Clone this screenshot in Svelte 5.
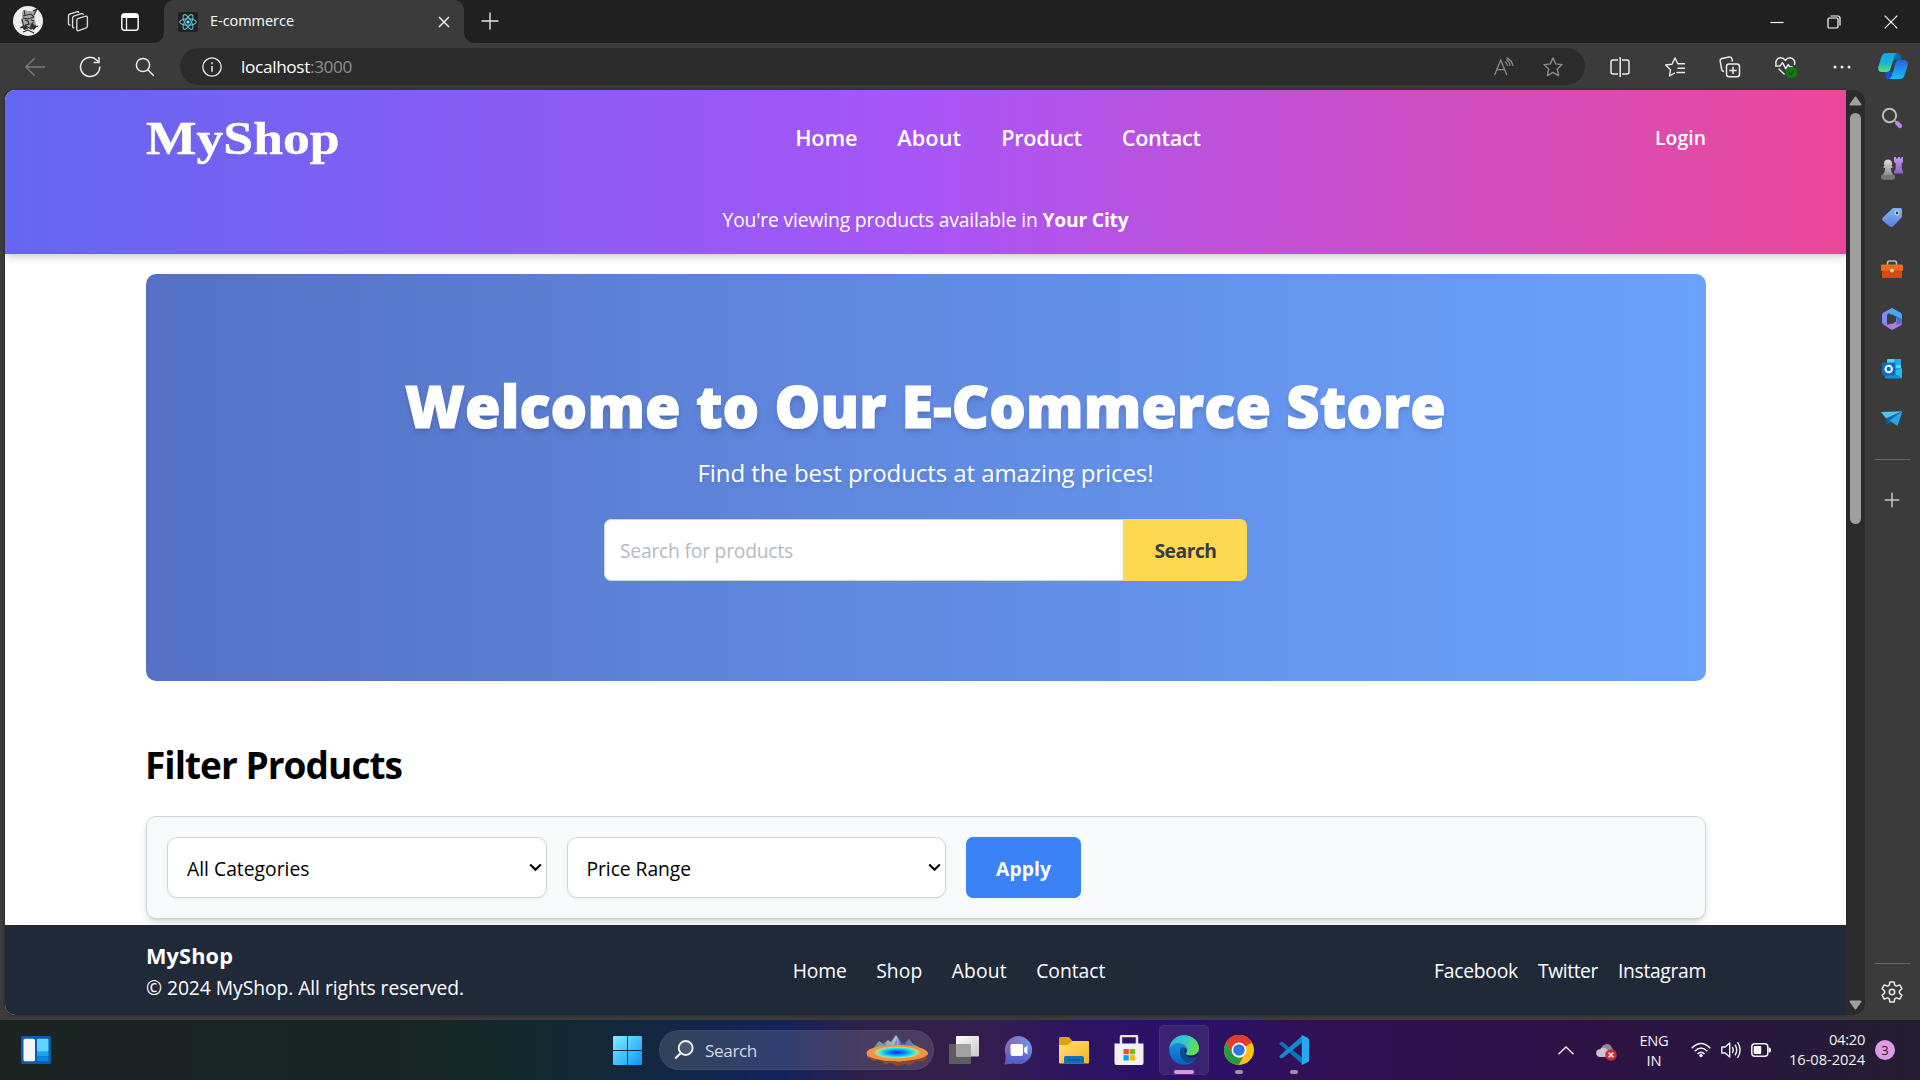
<script>
  // Spreads letter-spacing so that a label fills the given advance width.
  function fit(node, width) {
    const range = document.createRange();
    range.selectNodeContents(node);
    const natural = range.getBoundingClientRect().width;
    const count = node.textContent.length;
    node.style.letterSpacing = `${(width - natural) / count}px`;
  }

  const nav = [['Home', 62], ['About', 64], ['Product', 80.5], ['Contact', 79]];
  const footNav = [['Home', 54], ['Shop', 46], ['About', 55], ['Contact', 69]];
  const social = [['Facebook', 84], ['Twitter', 60], ['Instagram', 88]];
  const filters = [['All Categories', 122.5], ['Price Range', 104.5]];
</script>

<div class="screen">
  <div class="tabbar">
    <svg class="avatar" width="30" height="30" viewBox="0 0 30 30">
      <circle cx="15" cy="15" r="15" fill="#eee" />
      <path d="M9 6l3-2 3 1 5 0 3-2-2 8 2 7-4 6-6-2-5-6 1-5z" fill="#a5a5a5" />
      <path d="M11 4l1 5M20 5l4-2-3 6M10 10l8-2 3 3-6 2-5-1M12 14l3 1 1 3-4 1M18 14l3 1M7 22l6-2 5 3 7-3M10 26l5-2 6 3M20 16l-1 6M9 13l2 9" stroke="#2b2b2b" stroke-width="1.100" fill="none" />
      <path d="M18 17l6 3-3 4-4-2zM8 20l5-1 2 4-4 1z" fill="#333" />
    </svg>
    <svg class="spaces" width="22" height="22" viewBox="0 0 22 22" fill="none" stroke="#d6d6d6" stroke-width="1.4" stroke-linejoin="round" stroke-linecap="round">
      <path d="M10.8 7.600l7.800-2.400q1.800-.4 1.800 1.300v8.600q0 1.300-1.200 1.700l-7.500 2.800q-1.900.5-1.900-1.400V9.200q0-1.200 1-1.600z" />
      <path d="M6.800 16.700q-1.200.2-1.200-1.300V7q0-1.400 1.200-1.800l7.600-2.500q1.500-.4 1.800.6" />
      <path d="M3 14q-1.500.2-1.500-1.300V5q0-1.500 1.300-2l7-2.200q1.500-.4 1.900.6" />
    </svg>
    <svg class="vtabs" width="18" height="18" viewBox="0 0 18 18">
      <rect x=".8" y=".8" width="16.400" height="16.400" rx="2.800" fill="none" stroke="#f2f2f2" stroke-width="1.500" />
      <path d="M1 5V3q0-2 2-2h12q2 0 2 2v2z" fill="#fff" /><path d="M5.500 5v12" stroke="#f2f2f2" stroke-width="1.300" />
    </svg>
    <div class="tab">
      <svg width="20" height="20" viewBox="0 0 20 20" fill="none" stroke="#58c4dc" stroke-width="1.050">
        <rect width="20" height="20" rx="1.500" fill="#222" stroke="none" />
        <ellipse cx="10" cy="10" rx="8.300" ry="3.200" />
        <ellipse cx="10" cy="10" rx="8.300" ry="3.200" transform="rotate(60 10 10)" />
        <ellipse cx="10" cy="10" rx="8.300" ry="3.200" transform="rotate(120 10 10)" />
        <circle cx="10" cy="10" r="1.600" fill="#7fe7ff" stroke="none" />
      </svg>
      <span class="tabtitle" use:fit={84}>E-commerce</span>
      <svg class="tabclose" width="12" height="12" viewBox="0 0 12 12" stroke="#eee" stroke-width="1.500"><path d="M1 1l10 10M11 1L1 11" /></svg>
    </div>
    <svg class="newtab" width="18" height="18" viewBox="0 0 18 18" stroke="#e6e6e6" stroke-width="1.400"><path d="M9 .5v17M.5 9h17" /></svg>
    <div class="wincontrols">
      <svg width="14" height="14" viewBox="0 0 14 14" stroke="#fff" stroke-width="1.200"><path d="M.5 7.500h13" /></svg>
      <svg width="14" height="14" viewBox="0 0 14 14" stroke="#fff" stroke-width="1.200" fill="none"><rect x="1" y="3" width="10" height="10" rx="1.200" /><path d="M3.500 1H11q2 0 2 2v7.500" /></svg>
      <svg width="14" height="14" viewBox="0 0 14 14" stroke="#fff" stroke-width="1.200"><path d="M.7.700l12.600 12.600M13.300.700L.7 13.300" /></svg>
    </div>
  </div>

  <div class="toolbar">
    <svg class="back" width="20" height="18" viewBox="0 0 20 18" fill="none" stroke="#7c7c7c" stroke-width="1.300"><path d="M9.500.5L.8 9l8.700 8.500M.8 9H20" /></svg>
    <svg class="reload" width="22" height="22" viewBox="0 0 22 22" fill="none" stroke="#ececec" stroke-width="1.500"><path d="M20.700 10.500a9.600 9.600 0 1 1-2.800-6.300L20 6.300" /><path d="M20 1v5.400h-5.400" /></svg>
    <svg class="find" width="20" height="20" viewBox="0 0 20 20" fill="none" stroke="#ececec" stroke-width="1.500"><circle cx="8" cy="8" r="6.600" /><path d="M12.800 12.800l6 6" /></svg>
    <div class="urlbar">
      <svg width="20" height="20" viewBox="0 0 20 20" fill="none" stroke="#ececec" stroke-width="1.300"><circle cx="10" cy="10" r="9.200" /><path d="M10 9v5.800M10 5.300v1.900" stroke-width="1.500" /></svg>
      <span class="url"><span use:fit={69}>localhost</span><span class="port" use:fit={42}>:3000</span></span>
      <svg class="aloud" width="20" height="20" viewBox="0 0 20 20" fill="none" stroke="#8b8b8b" stroke-width="1.300"><path d="M.6 18L6.800 3l6 15M2.600 12.700h8.200" /><path d="M11 4.700q2.200 1.400 2.500 4.300M12.500 2.500q3.200 2.300 3.600 6.500M12.500.6q5.500 2.800 6.500 8.400" /></svg>
      <svg width="20" height="20" viewBox="0 0 20 20" fill="none" stroke="#8b8b8b" stroke-width="1.400" stroke-linejoin="round"><path d="M10 1l2.700 5.900 6.300.7-4.700 4.400 1.300 6.600L10 15.400l-5.600 3.200 1.300-6.600L1 7.600l6.300-.7z" /></svg>
    </div>
    <div class="tools">
      <svg width="22" height="22" viewBox="0 0 22 22" fill="none" stroke="#ececec" stroke-width="1.500"><path d="M9 4H4Q2 4 2 6v10q0 2 2 2h5M13 4h5q2 0 2 2v10q0 2-2 2h-5M11.200 1v20" /></svg>
      <svg width="22" height="22" viewBox="0 0 22 22" fill="none" stroke="#ececec" stroke-width="1.400" stroke-linejoin="round" stroke-linecap="round"><path d="M10.600 17L5.500 20l1-6.300L1.600 9l6.400-.8L11 2l2.800 5.700h6.700M14 12.300h6.500M13 16.500h7.500" /></svg>
      <svg width="22" height="22" viewBox="0 0 22 22" fill="none" stroke="#ececec" stroke-width="1.500" stroke-linejoin="round"><rect x="7.500" y="8" width="13" height="12.800" rx="2.500" /><path d="M14 10.700v7.400M10.300 14.400h7.400M5 15.500q-1.800 0-2.300-2L1.200 5.200Q.9 3 3 2.500L10 1q2.200-.4 2.900 1.700l.6 2.800" /></svg>
      <svg width="24" height="24" viewBox="0 0 24 24" fill="none" stroke="#ececec" stroke-width="1.500" stroke-linejoin="round"><path d="M2.200 10C1 6.500 3 2.700 6.600 2.700c2.600 0 4 1.700 4.700 2.600.7-.9 2.100-2.600 4.700-2.600 3.600 0 5.600 3.800 4.400 7.300M4.600 13.800l6 5.700M1 11h5l2.500-3.300 3.200 6 2.500-4 1.300 2h3" /><circle cx="17.500" cy="17.500" r="5.800" fill="#107c10" stroke="none" /><path d="M14.800 17.500l1.900 2 3.500-4" stroke="#164d16" stroke-width="1.400" /></svg>
      <svg width="22" height="22" viewBox="0 0 22 22" fill="#ececec"><circle cx="4" cy="11" r="1.500" /><circle cx="11" cy="11" r="1.500" /><circle cx="18" cy="11" r="1.500" /></svg>
    </div>
    <svg class="copilot" width="30" height="28" viewBox="0 0 30 28">
      <defs>
        <linearGradient id="cpa" x1="0" y1="0" x2="0" y2="1"><stop offset="0" stop-color="#14a5f0" /><stop offset=".5" stop-color="#12b5cf" /><stop offset="1" stop-color="#5be079" /></linearGradient>
        <linearGradient id="cpb" x1="0" y1="0" x2="0" y2="1"><stop offset="0" stop-color="#2165d8" /><stop offset="1" stop-color="#14c0fa" /></linearGradient>
      </defs>
      <path d="M14 1h5.500Q22 1 22.800 4l1 4H18q-3 0-4 3z" fill="#0a6aa8" />
      <path d="M7 20h8l-2 5q-1 2.500-3 2.500T8 25z" fill="#1a4fd8" />
      <path d="M8.500 1H19q-2 .5-3 4l-3.500 12q-.8 3-4 3H3.500Q-.5 20 .3 15L3 6q1.300-5 5.500-5z" fill="url(#cpa)" />
      <path d="M21 8h5.500q4 .5 3.300 5L27 22q-1.300 5-5.500 5H10.500q2.500-.5 3.500-4l3.500-12q.8-3 3.500-3z" fill="url(#cpb)" />
    </svg>
  </div>

  <div class="middle">
    <div class="page">
      <header>
        <div class="headrow">
          <div class="logo"><span>MyShop</span></div>
          <nav class="mainnav">{#each nav as [label, w]}<a href="#top" use:fit={w}>{label}</a>{/each}</nav>
          <a class="login" href="#login" use:fit={51}>Login</a>
        </div>
        <div class="banner"><span use:fit={320}>You're viewing products available in&nbsp;</span><b use:fit={86}>Your City</b></div>
      </header>
      <main>
        <section class="hero">
          <h1><span use:fit={1041}>Welcome to Our E-Commerce Store</span></h1>
          <p><span use:fit={456}>Find the best products at amazing prices!</span></p>
          <div class="searchrow">
            <div class="field"><span use:fit={173}>Search for products</span></div>
            <button class="go"><span use:fit={62}>Search</span></button>
          </div>
        </section>
        <h2><span use:fit={257}>Filter Products</span></h2>
        <section class="panel">
          {#each filters as [label, w]}
            <div class="select"><span use:fit={w}>{label}</span>
              <svg width="13" height="9" viewBox="0 0 13 9" fill="none" stroke="#000" stroke-width="2.200"><path d="M1.200 1.500l5.300 5.200 5.300-5.200" /></svg>
            </div>
          {/each}
          <button class="apply"><span use:fit={55}>Apply</span></button>
        </section>
      </main>
      <footer>
        <div class="brand"><b use:fit={87}>MyShop</b><span use:fit={318}>© 2024 MyShop. All rights reserved.</span></div>
        <nav class="footnav">{#each footNav as [label, w]}<a href="#foot" use:fit={w}>{label}</a>{/each}</nav>
        <div class="social">{#each social as [label, w]}<a href="#foot" use:fit={w}>{label}</a>{/each}</div>
      </footer>
    </div>
    <div class="scroll">
      <svg width="13" height="10" viewBox="0 0 13 10"><path d="M6.500 1.500L11.500 8.500h-10z" fill="#9f9f9f" stroke="#9f9f9f" stroke-width="2" stroke-linejoin="round" /></svg>
      <div class="thumb"></div>
      <svg class="down" width="13" height="10" viewBox="0 0 13 10"><path d="M6.500 8.500L11.500 1.500h-10z" fill="#9f9f9f" stroke="#9f9f9f" stroke-width="2" stroke-linejoin="round" /></svg>
    </div>
    <aside>
      <svg width="24" height="24" viewBox="0 0 24 24"><circle cx="9.500" cy="9.500" r="6.700" fill="none" stroke="#bdbdbd" stroke-width="2" /><path d="M14 14l3 3" stroke="#999" stroke-width="2" /><path d="M17.300 17.300l2.700 2.700" stroke="#b987ee" stroke-width="4.200" stroke-linecap="round" /></svg>
      <svg width="24" height="24" viewBox="0 0 24 24">
        <defs><linearGradient id="pawn" x1="0" y1="0" x2="0" y2="1"><stop offset="0" stop-color="#ddd" /><stop offset="1" stop-color="#777" /></linearGradient><linearGradient id="rook" x1="0" y1="0" x2="0" y2="1"><stop offset="0" stop-color="#c797fa" /><stop offset="1" stop-color="#8f62bd" /></linearGradient></defs>
        <path d="M14 1h2v1.500h2V1h2v1.500h1.500V1H23v5l-1.500 1.500.5 6 1 2V17.500h-9v-2l1.500-2 .3-6L14 6z" fill="url(#rook)" />
        <path d="M8 3.500a4 4 0 0 1 3.400 6.200q1.600.5 1.100 2.300h-1.800q.3 4 2.300 6.500 2.200.5 2 2.500 0 2.500-2.500 2.500h-9Q1 23.500 1 21q0-2 2-2.500Q5 16 5.300 12H3.500q-.5-1.800 1.100-2.300A4 4 0 0 1 8 3.500z" fill="url(#pawn)" />
        <path d="M1.500 19h13v2q0 2.500-2.500 2.500H4Q1.500 23.500 1.500 21z" fill="#777" /></svg>
      <svg width="24" height="24" viewBox="0 0 24 24"><defs><linearGradient id="tag" x1="0" y1="0" x2="0" y2="1"><stop offset="0" stop-color="#7cb3f5" /><stop offset="1" stop-color="#5b83df" /></linearGradient></defs><path d="M13 2h7q2 0 2 2v7l-8.500 9q-2 2-4 .3L2.600 14.500q-1.300-1.300.2-3z" fill="url(#tag)" /><circle cx="17" cy="7" r="2.400" fill="#e8e8e8" /><circle cx="17" cy="7" r="1.400" fill="#333" /></svg>
      <svg width="24" height="24" viewBox="0 0 24 24"><path d="M7.500 8V6q0-2 2-2h5q2 0 2 2v2" fill="none" stroke="#bbb" stroke-width="1.600" /><rect x="1" y="7.500" width="22" height="6.500" rx="1" fill="#ee6a25" /><path d="M2 13.500h20v6q0 1.500-1.500 1.500h-17Q2 21 2 19.500z" fill="#d9480f" /><circle cx="12" cy="13.500" r="2" fill="#c9c9c9" /></svg>
      <svg width="24" height="24" viewBox="0 0 24 24"><path d="M12 1L3.500 5.500Q2 6.500 2 8v8l5 2.500V9q0-2 2-2.800L15 3z" fill="#7f8df0" /><path d="M12 1l8.500 4.500Q22 6.500 22 8v7l-4 2-3-5.500L9.500 6.500 9 4z" fill="#46a9ea" /><path d="M22 12v4q0 1.500-1.500 2.500L14 22q-2 1.500-4 0l-8-5.500 5.500 1q1.500.3 3-.7z" fill="#b07ae2" /><path d="M15.500 8.500L22 12v4l-6 2 1-3.500z" fill="#4b6bc8" /><path d="M12 7.300l4 2.300v5L12 17l-4-2.400v-5z" fill="#3b3b3b" /></svg>
      <svg width="24" height="24" viewBox="0 0 24 24"><path d="M7 3q0-1 1-1h13v12H7z" fill="#4fd5fb" /><path d="M7 8h7v6H7zM14 2h7v6h-7z" fill="#28a8ea" /><path d="M5 12l17-1v9q0 1.500-1.500 1.500h-14Q5 21.500 5 20z" fill="#1490df" /><path d="M22 11v9.500L11 15z" fill="#1fc0f0" /><rect x="2" y="5.500" width="13.500" height="13" rx="1.500" fill="#0f6cbd" /><ellipse cx="8.700" cy="12" rx="3.200" ry="3.300" fill="none" stroke="#fff" stroke-width="2" /></svg>
      <svg width="24" height="24" viewBox="0 0 24 24"><path d="M1 5l21.500-.8L6 11.500z" fill="#48c8f5" /><path d="M6 11.500L22.500 4.200 9 17z" fill="#1267b5" /><path d="M22.500 4.200L17.500 19 9.500 13.500z" fill="#27a5ea" /><path d="M6 11.500L6.300 18l4-3.800z" fill="#0b5b9f" /></svg>
      <hr />
      <svg class="plus" width="24" height="24" viewBox="0 0 24 24" stroke="#c8c8c8" stroke-width="1.500"><path d="M12 4.700v14.600M4.700 12h14.600" /></svg>
      <hr class="low" />
      <svg class="gear" width="24" height="24" viewBox="0 0 24 24" fill="none" stroke="#ececec" stroke-width="1.500" stroke-linejoin="round"><path d="M9.900 2h4.200l.6 3.100 1.700 1 3.300-1.200 2.200 3.800L19.400 11v2l2.500 2.300-2.200 3.800-3.300-1.200-1.700 1-.6 3.100H9.900l-.6-3.100-1.700-1-3.300 1.200-2.200-3.800L4.600 13v-2L2.100 8.700l2.200-3.800 3.300 1.200 1.700-1z" /><circle cx="12" cy="12" r="2.700" /></svg>
    </aside>
  </div>

  <div class="taskbar">
    <svg class="widgets" width="30" height="28" viewBox="0 0 30 28"><rect width="30" height="28" rx="1.500" fill="#0b5cae" /><rect x="2.500" y="2.800" width="11.500" height="22.500" rx="1.500" fill="#f4f4f4" /><rect x="16" y="2.800" width="11.500" height="13" rx="1" fill="#62d4fc" /><rect x="16" y="16" width="11.500" height="4.500" fill="#1aa0f5" /><rect x="16" y="20.800" width="11.500" height="4.500" rx="1" fill="#0a84e6" /></svg>
    <svg class="start" width="29" height="29" viewBox="0 0 29 29"><defs><linearGradient id="win" x1="0" y1="0" x2="1" y2="1"><stop offset="0" stop-color="#7df0ff" /><stop offset="1" stop-color="#0a96fa" /></linearGradient></defs><path d="M0 1q0-1 1-1h13v14H0zM15 0h13q1 0 1 1v13H15zM0 15h14v14H1q-1 0-1-1zM15 15h14v13q0 1-1 1H15z" fill="url(#win)" /></svg>
    <div class="tsearch">
      <svg width="20" height="20" viewBox="0 0 20 20" fill="rgba(255,255,255,.12)" stroke="#f0f0f0" stroke-width="1.900"><circle cx="11.700" cy="8" r="7" /><path d="M6.500 13.200L1.300 18.500" stroke-width="2.200" /></svg>
      <span use:fit={52}>Search</span>
      <svg class="spring" width="62" height="31" viewBox="0 0 62 31">
        <defs><radialGradient id="pool"><stop offset="0" stop-color="#1228f0" /><stop offset=".35" stop-color="#0b8cf5" /><stop offset=".65" stop-color="#20e6e0" /><stop offset=".82" stop-color="#b8d890" /><stop offset="1" stop-color="#f58a35" /></radialGradient><linearGradient id="mount"><stop offset="0" stop-color="#5b958f" /><stop offset=".5" stop-color="#a9c3d6" /><stop offset=".6" stop-color="#4b62a8" /><stop offset="1" stop-color="#6fae90" /></linearGradient></defs>
        <path d="M8 12l5-6 4 3 5-4 3 2 5-7 5 7 3 2 5-5 4 5 6 3v5H8z" fill="url(#mount)" />
        <path d="M16 12l3-5 2 5M27 12l4-9 0 9M42 12l2-6 3 6" fill="#6a70c0" opacity=".7" />
        <path d="M1 16v7l7 3 5-.5 6 3.500 6-1 6 3 8-2 5 1 7-4 5 .5 5-3V17z" fill="#8e4626" />
        <path d="M1 16v5l7 2.500 5-.5 6 3 7-1 7 2 8-2 7-1 6-2 8-2V17z" fill="#e07d3a" />
        <ellipse cx="31" cy="18" rx="30.500" ry="8.200" fill="#ee9349" /><ellipse cx="31" cy="17.500" rx="25" ry="6.500" fill="url(#pool)" />
      </svg>
    </div>
    <div class="apps">
      <div class="app"><svg width="30" height="30" viewBox="0 0 30 30"><defs><linearGradient id="tv" x1="0" y1="0" x2="1" y2="1"><stop offset="0" stop-color="#fff" /><stop offset="1" stop-color="#c9c9c9" /></linearGradient></defs><rect x="0" y="9" width="22" height="20" rx="1" fill="#5d5d5d" /><rect x="7" y="1" width="23" height="20.500" rx="1" fill="url(#tv)" /><path d="M7 9h15v12.500H8q-1 0-1-1z" fill="#a2a2a2" /></svg></div>
      <div class="app"><svg width="30" height="30" viewBox="0 0 30 30"><defs><linearGradient id="chat" x1="0" y1="0" x2="1" y2="0"><stop offset="0" stop-color="#8a64b0" /><stop offset="1" stop-color="#6c97e6" /></linearGradient><linearGradient id="chat2" x1="0" y1="0" x2="0" y2="1"><stop offset=".35" stop-color="#5059c9" stop-opacity="0" /><stop offset="1" stop-color="#5059c9" /></linearGradient></defs><path d="M15 1a14 14 0 1 1-5.500 27.200Q5 29 .5 29.200 2 26 1.700 20A14 14 0 0 1 15 1z" fill="url(#chat)" /><path d="M15 1a14 14 0 1 1-5.500 27.200Q5 29 .5 29.200 2 26 1.700 20A14 14 0 0 1 15 1z" fill="url(#chat2)" /><rect x="6.500" y="9" width="12.500" height="12" rx="2" fill="#fff" /><path d="M20 13l3.500-2.500v9L20 17z" fill="#f2f2f2" /></svg></div>
      <div class="app"><svg width="30" height="30" viewBox="0 0 30 30"><defs><linearGradient id="fold" x1="0" y1="0" x2="1" y2="1"><stop offset="0" stop-color="#ffe07a" /><stop offset="1" stop-color="#f5b51c" /></linearGradient></defs><path d="M0 3.500Q0 2 1.500 2H10l3 3.500v5H0z" fill="#e0a010" /><path d="M0 10h9l4-4h16q1 0 1 1v20.500q0 1-1 1H1q-1 0-1-1z" fill="url(#fold)" /><path d="M5 28.500V23q0-2 2-2h16q2 0 2 2v5.500z" fill="#0d6fc0" /><path d="M9 25h12" stroke="#174e84" stroke-width="1.200" /></svg></div>
      <div class="app"><svg width="30" height="30" viewBox="0 0 30 30"><path d="M7 11V2q0-1 1-1h14q1 0 1 1v9" fill="none" stroke="#e3e3e3" stroke-width="2.500" /><path d="M.5 8.500h29V28q0 2-2 2h-25q-2 0-2-2z" fill="#f1f1f1" /><path d="M9.500 14h5.300v5.300H9.500z" fill="#f25022" /><path d="M15.700 14H21v5.300h-5.300z" fill="#7fba00" /><path d="M9.500 20.200h5.300v5.300H9.500z" fill="#00a4ef" /><path d="M15.700 20.200H21v5.300h-5.300z" fill="#ffb900" /></svg></div>
      <div class="app active"><svg width="30" height="30" viewBox="0 0 30 30"><defs><linearGradient id="eg" x1="0" y1="0" x2="1" y2=".4"><stop offset="0" stop-color="#2fb0ee" /><stop offset=".55" stop-color="#35c8c8" /><stop offset="1" stop-color="#66df4a" /></linearGradient><linearGradient id="eb" x1="0" y1="0" x2="0" y2="1"><stop offset="0" stop-color="#1f9de6" /><stop offset="1" stop-color="#0a5fc0" /></linearGradient></defs><circle cx="15" cy="15" r="14.800" fill="url(#eb)" /><path d="M.3 13.500C1.500 5.500 7.500.2 15 .2c8.500 0 15 5.800 15 12.800 0 4.500-3.500 7.500-8 7.500-3.500 0-5.500-1.200-5-2.200 1-1.300 1.500-2.300 1.300-3.800C18 11.300 14.500 8 9.500 8 5 8 1.800 10.500.3 13.500z" fill="url(#eg)" /><path d="M11.500 13.500c-2 6 1.500 13 8 14.500 3.200-.3 7-3 9-6 .2-.5-.3-1-.8-.7-5 2.500-11.200.3-12-4-.3-1.500.3-3 1.300-4-1.500-1.200-4-1.200-5.500.2z" fill="#114a8b" /><path d="M16.800 18.300c-.6 1 1.500 2.200 5 2.200 3 0 5.500-1.200 7-3.300l1.200 2.500-1.500 1.700c-5 2.700-11.500 1-12.700-3.500-.5-1.800 0-3.500 1-4.500 1.300 1.500 1.200 3.500 0 4.900z" fill="#2b1763" /></svg></div>
      <div class="app open"><svg width="30" height="30" viewBox="0 0 30 30"><circle cx="15" cy="15" r="15" fill="#fbc116" /><path d="M15 15L2 7.500A15 15 0 0 1 28 7.500z" fill="#e33b2e" /><path d="M2 7.500L8.500 18.800 15 15V7.500h13A15 15 0 0 0 2 7.500z" fill="#e33b2e" /><path d="M2 7.500l6.500 11.300Q11 22.500 15 22.500h4L14.500 30A15 15 0 0 1 2 7.500z" fill="#259a45" /><circle cx="15" cy="15" r="7.400" fill="#fff" /><circle cx="15" cy="15" r="5.800" fill="#2f76ea" /></svg></div>
      <div class="app open"><svg width="30" height="30" viewBox="0 0 30 30"><path d="M2.200 6.800Q3 6.500 4 7.200L23 22.500V29L.7 9.200Q0 8.400.7 7.800z" fill="#0b73b8" /><path d="M2.200 23.200Q3 23.500 4 22.800L23 7.500V1L.7 20.800q-.7.800 0 1.400z" fill="#1489cf" /><path d="M22 .5q.6-.6 1.400-.2L29 3q1 .5 1 1.500v21q0 1-1 1.500l-5.600 2.700q-.8.400-1.400-.2.800.3.800-1V1.500Q22.800.2 22 .5z" fill="#27a9f2" /></svg></div>
    </div>
    <div class="tray">
      <svg class="up" width="16" height="9" viewBox="0 0 16 9" fill="none" stroke="#eee" stroke-width="1.400"><path d="M.5 8.300L8 1l7.500 7.300" /></svg>
      <svg class="cloud" width="21" height="18" viewBox="0 0 21 18"><path d="M5 7q0-5 5.500-6Q15 .8 16 5l2 3-4 6H6z" fill="#8e8795" /><path d="M4 14q-3.800-.3-3.800-4T4 6.200Q6 3 10 5.500l5 4v4.500z" fill="#c9c3cf" /><circle cx="15" cy="12" r="5.800" fill="#d42a35" /><path d="M12.700 9.700l4.600 4.600M17.300 9.700l-4.600 4.600" stroke="#fff" stroke-width="1.500" /></svg>
      <div class="lang"><span use:fit={29}>ENG</span><span use:fit={15}>IN</span></div>
      <svg class="wifi" width="20" height="16" viewBox="0 0 20 16" fill="none" stroke="#f2f2f2" stroke-width="1.500"><path d="M.7 6.300q9.300-9.500 18.600 0M3.600 9.200q6.400-6.600 12.800 0M6.500 12q3.500-3.500 7 0" /><circle cx="10" cy="13.500" r="1.700" fill="#f2f2f2" stroke="none" /></svg>
      <svg class="vol" width="20" height="18" viewBox="0 0 20 18" fill="none" stroke="#f2f2f2" stroke-width="1.400" stroke-linejoin="round"><path d="M.8 6v6h3.400l4.500 4V2L4.200 6zM11.200 6q2 3 0 6M14 3.700q3.500 5.300 0 10.600M16.500 1.200q5.200 7.800 0 15.600" /></svg>
      <svg class="batt" width="20" height="14" viewBox="0 0 20 14"><rect x=".8" y=".8" width="16" height="12.400" rx="3" fill="none" stroke="#f2f2f2" stroke-width="1.500" /><rect x="2.700" y="3" width="7.500" height="8" rx="1" fill="#fff" /><path d="M17.500 4.500h1q1.500 0 1.500 2.500t-1.500 2.500h-1z" fill="#f2f2f2" /></svg>
      <div class="clock"><span use:fit={36}>04:20</span><span use:fit={76}>16-08-2024</span></div>
      <div class="badge">3</div>
    </div>
  </div>
</div>

<style>
  :global(body) { margin: 0; overflow: hidden; background: #3b3b3b; }
  * { box-sizing: border-box; }
  svg { display: block; flex: none; }
  a { color: inherit; text-decoration: none; }
  span, a, b, .logo { white-space: nowrap; }
  button { font: inherit; border: 0; padding: 0; }
  .screen { width: 1920px; height: 1080px; display: flex; flex-direction: column; overflow: hidden; font-family: "Open Sans", "Noto Sans", sans-serif; background: #3b3b3b; }

  .tabbar { height: 43px; flex: none; background: #202020; display: flex; align-items: center; padding-left: 13px; }
  .avatar { margin-top: -1px; }
  .spaces { margin-left: 24px; }
  .vtabs { margin-left: 32px; }
  .tab { width: 300px; height: 43px; margin-left: 25px; background: #3b3b3b; border-radius: 10px 10px 0 0; display: flex; align-items: center; padding: 0 14px; }
  .tab { position: relative; }
  .tab::before, .tab::after { content: ""; position: absolute; bottom: 0; width: 10px; height: 10px; }
  .tab::before { left: -10px; background: radial-gradient(circle at 0 0, #202020 9.5px, #3b3b3b 10px); }
  .tab::after { right: -10px; background: radial-gradient(circle at 100% 0, #202020 9.5px, #3b3b3b 10px); }
  .tabtitle { margin-left: 12px; font-size: 14.5px; line-height: 20px; color: #fff; margin-top: -2px; }
  .tabclose { margin-left: auto; }
  .newtab { margin-left: 17px; margin-top: -2px; }
  .wincontrols { margin-left: auto; display: flex; gap: 43px; padding-right: 22px; }

  .toolbar { height: 47px; flex: none; display: flex; align-items: center; padding-left: 25px; }
  .reload { margin-left: 34px; }
  .find { margin-left: 34px; }
  .urlbar { width: 1405px; height: 37px; margin-left: 25px; border-radius: 19px; background: #2b2b2b; display: flex; align-items: center; padding: 0 22px 0 22px; }
  .url { margin-left: 19px; font-size: 17.2px; line-height: 24px; color: #fff; margin-top: 0; }
  .port { color: #8e8e8e; }
  .aloud { margin-left: auto; margin-right: 29px; }
  .tools { display: flex; align-items: center; gap: 33px; margin-left: 24px; }
  .copilot { margin-left: 25px; margin-top: -2px; }

  .middle { height: 930px; flex: none; display: flex; padding-left: 5px; }
  .page { width: 1841px; height: 925px; background: #fff; border-radius: 10px 0 0 10px; overflow: hidden; display: flex; flex-direction: column; box-shadow: 0 0 3px #222; }
  header { height: 164px; flex: none; padding: 0 140px 0 141px; background: linear-gradient(90deg, #6366f1, #a855f7 50%, #ec4899); color: #fff; box-shadow: 0 5px 8px -1px rgba(0,0,0,.13), 0 2px 5px -2px rgba(0,0,0,.12); z-index: 1; }
  .headrow { height: 96px; display: flex; align-items: center; justify-content: space-between; }
  .logo { font: bold 47px "Liberation Serif", serif; line-height: 56px; width: 195px; }
  .logo span { display: inline-block; transform: scaleX(1.14); transform-origin: left; -webkit-text-stroke: .4px #fff; }
  .mainnav { display: flex; gap: 40px; font-size: 21.7px; font-weight: 600; line-height: 30px; }
  .login { font-size: 19.3px; font-weight: 600; line-height: 30px; }
  .banner { height: 68px; display: flex; justify-content: center; align-items: center; font-size: 19.3px; line-height: 28px; padding-right: 1px; }
  main { flex: 1; padding: 20px 140px 0 141px; overflow: hidden; min-height: 0; }
  .hero { height: 407px; border-radius: 10px; background: linear-gradient(90deg, #5570c4, #5f86dc 40%, #6ba2fb); color: #fff; padding: 95px 1px 0 0; display: flex; flex-direction: column; align-items: center; }
  h1 { margin: 0; font-size: 57.5px; font-weight: 800; line-height: 75px; text-shadow: 0 5px 7px rgba(0,0,0,.1), 0 3px 3px rgba(0,0,0,.06); -webkit-text-stroke: 1.200px #fff; }
  p { margin: 11px 0 0; font-size: 24px; line-height: 35px; text-shadow: 0 4px 4px rgba(0,0,0,.08); }
  .searchrow { display: flex; margin-top: 29px; width: 643px; height: 62px; font-size: 19.3px; line-height: 28px; }
  .field { width: 520px; background: #fff; border: 1px solid #d1d5db; border-radius: 7px 0 0 7px; color: #b6bac2; padding: 17px 0 0 15px; }
  .go { flex: 1; background: #fcd950; color: #383c44; font-weight: 700; border-radius: 0 7px 7px 0; padding-top: 2px; }
  h2 { margin: 61px 0 0; font-size: 37px; font-weight: 700; line-height: 45px; color: #000; text-indent: -1px; }
  .panel { margin-top: 29px; height: 103px; border: 1px solid #d1d5db; border-radius: 10px; background: #f9fafb; box-shadow: 0 5px 8px -1px rgba(0,0,0,.12), 0 2px 5px -2px rgba(0,0,0,.12); padding: 20px; display: flex; gap: 20px; font-size: 19.3px; line-height: 28px; color: #000; }
  .select { width: 379.500px; height: 61px; background: #fff; border: 1px solid #d1d5db; border-radius: 10px; box-shadow: 0 1px 3px rgba(0,0,0,.06); display: flex; justify-content: space-between; align-items: center; padding: 0 4px 0 19px; }
  .select span { padding-top: 2px; }
  .select svg { margin-top: -1px; }
  .apply { width: 115px; height: 61px; background: #3b82f6; color: #fff; border-radius: 7px; font-weight: 700; padding-top: 2px; }
  footer { height: 90px; flex: none; background: #1f2937; color: #fff; padding: 2px 140px 0 141px; display: flex; justify-content: space-between; align-items: center; font-size: 19.3px; line-height: 30px; z-index: 1; }
  .brand { display: flex; flex-direction: column; margin-top: -1px; }
  .brand b { font-size: 21.7px; line-height: 35px; }
  .footnav { display: flex; gap: 29.500px; }
  .social { display: flex; gap: 20px; }

  .scroll { width: 19px; height: 925px; background: #2b2b2b; border-radius: 0 12px 12px 0; display: flex; flex-direction: column; align-items: center; padding: 6px 0 5px; }
  .thumb { width: 11px; height: 411px; margin-top: 7px; border-radius: 6px; background: #9f9f9f; }
  .down { margin-top: auto; }
  aside { width: 55px; height: 930px; display: flex; flex-direction: column; align-items: center; gap: 26.200px; padding: 16px 1px 0 0; }
  hr { width: 35px; height: 1px; border: 0; margin: 2px 0 0; background: #666; flex: none; }
  .plus { margin: 1px 0 0; }
  .low { margin-top: auto; }
  .gear { margin: -10px 0 16px; }

  .taskbar { height: 60px; flex: none; display: flex; align-items: center; padding-left: 21px; color: #f2f2f2; background: linear-gradient(90deg, #1c2422 0, #1a2523 390px, #132a2c 530px, #12264a 700px, #14235c 780px, #2f2049 870px, #33204a 960px, #2c1464 1090px, #2a1069 1190px, #311155 1320px, #2e1146 1560px, #291640 1700px, #241e31 1920px); }
  .start { margin-left: 562px; }
  .tsearch { width: 275px; height: 40px; margin-left: 17px; border-radius: 20px; background: rgba(255,255,255,.13); display: flex; align-items: center; padding: 0 5px 0 14px; border: 1px solid rgba(255,255,255,.04); }
  .tsearch span { font-size: 17.2px; line-height: 24px; margin: 1px 0 0 11px; color: #d5d8df; }
  .spring { margin: 0 0 0 auto; }
  .apps { display: flex; gap: 5px; margin-left: 5px; }
  .app { width: 50px; height: 50px; border-radius: 5px; display: flex; justify-content: center; align-items: center; position: relative; }
  .active { background: rgba(255,255,255,.08); border: 1px solid rgba(255,255,255,.06); }
  .active::after, .open::after { content: ""; position: absolute; left: 50%; bottom: 1px; height: 4px; border-radius: 2px; transform: translateX(-50%); }
  .active::after { width: 20px; background: #d99be0; bottom: 0; }
  .open::after { width: 8px; background: #a08fb3; }
  .tray { display: flex; align-items: center; margin-left: 239px; font-size: 14.7px; line-height: 20px; }
  .cloud { margin-left: 22px; margin-top: 4px; }
  .lang { width: 40px; margin-left: 17px; display: flex; flex-direction: column; align-items: center; }
  .wifi { margin-left: 17px; }
  .vol { margin-left: 10px; }
  .batt { margin-left: 10px; }
  .clock { width: 76px; margin: -2px 0 0 18px; display: flex; flex-direction: column; align-items: flex-end; }
  .badge { width: 20px; height: 20px; margin-left: 10px; border-radius: 50%; background: #dc9be3; color: #241e31; font-size: 13px; text-align: center; }
</style>
